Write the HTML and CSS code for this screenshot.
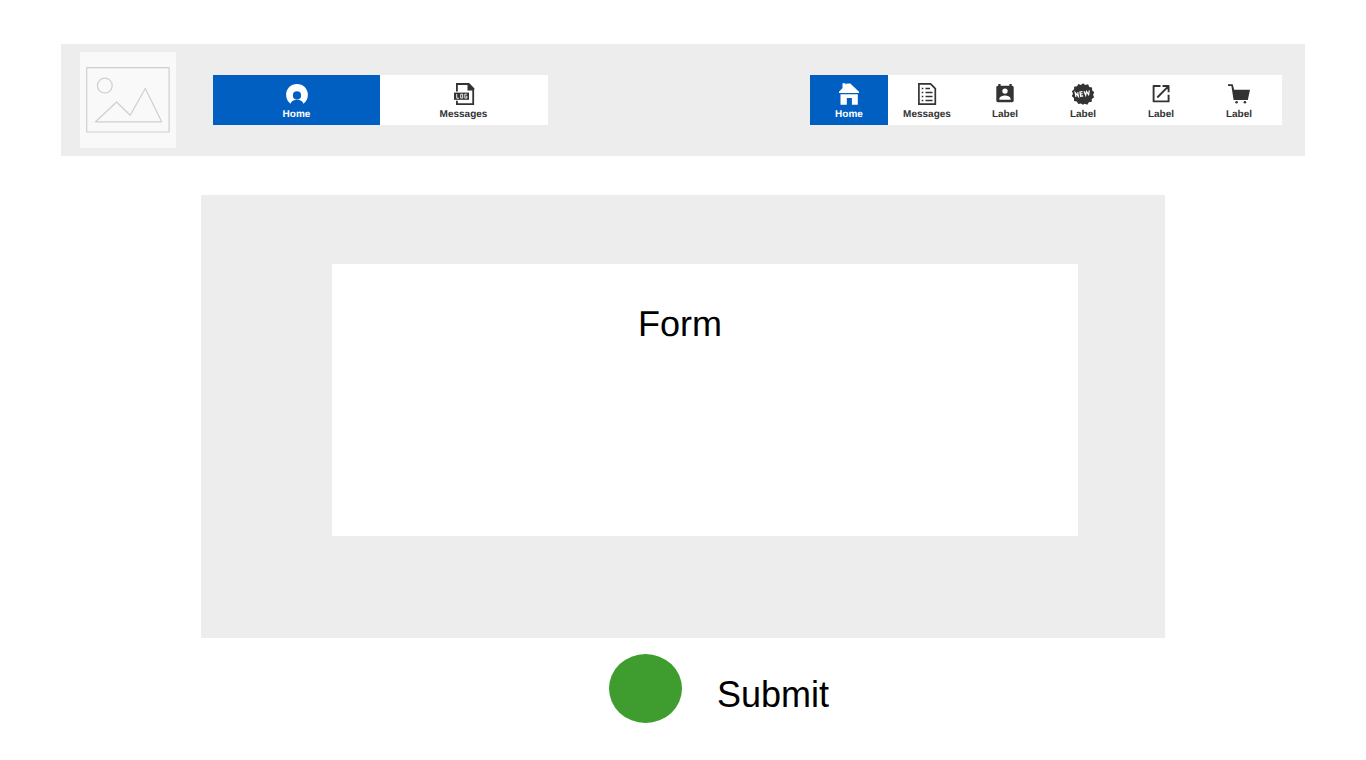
FILE: index.html
```html
<!DOCTYPE html>
<html lang="en">
<head>
<meta charset="utf-8">
<meta name="viewport" content="width=device-width, initial-scale=1">
<title>Form</title>
<link rel="stylesheet" href="styles.css">
</head>
<body>
<header class="header">
  <svg class="logo" viewBox="0 0 96 96" role="img" aria-label="Logo placeholder">
    <rect width="96" height="96" fill="#f9f9f9"/>
    <g fill="none" stroke="#cfcfcf" stroke-width="1.2" stroke-linejoin="round">
      <rect x="6.700" y="15.600" width="82.400" height="64.400" rx="0.600"/>
      <circle cx="24.800" cy="33.600" r="7.400"/>
      <path d="M15.500 69.800 36.600 50 50.200 63.300 65.300 36.500 81.700 69.800Z"/>
    </g>
  </svg>
  <nav class="tabs tabs-main" aria-label="Main">
    <a class="tab active" href="#">
      <svg class="icon" viewBox="0 0 24 24" fill="currentColor" aria-hidden="true">
        <path fill-rule="evenodd" d="M12 2C5.900 2 1.100 6.700 1.100 12.500c0 4.200 1.800 7.300 4.400 9.300C6.200 19.300 8.800 17.800 12 17.800s5.800 1.500 6.500 4c2.600-2 4.400-5.100 4.400-9.300C22.900 6.700 18.100 2 12 2Zm0 7.300a4.100 4.100 0 1 1 0 8.200 4.100 4.100 0 0 1 0-8.200Z"/>
      </svg>
      <span class="label">Home</span>
    </a>
    <a class="tab" href="#">
      <svg class="icon" viewBox="0 0 24 24" fill="currentColor" aria-hidden="true">
        <path d="M4.900 9.500V2h11.500l4.800 4.800v15.300H4.900V18.800" fill="none" stroke="currentColor" stroke-width="1.800"/>
        <path d="M15.500 1.200h1.800l4.800 5v2.200h-6.600Z"/>
        <rect x="2" y="10.600" width="15" height="7.200"/>
        <path d="M4.700 12v4.200h2.200M8.700 12.200h2v3.900h-2ZM14.900 12.200h-2.100v3.900h2.100v-1.900h-1" fill="none" stroke="#fff" stroke-width="0.900"/>
      </svg>
      <span class="label">Messages</span>
    </a>
  </nav>
  <nav class="tabs tabs-side" aria-label="Secondary">
    <a class="tab active" href="#">
      <svg class="icon" viewBox="0 0 24 24" fill="currentColor" aria-hidden="true">
        <path d="M2 11v-1.200L5.500 6V1.300h3v1.200l1.600-1.100h3.200L22 9.800V11Z"/>
        <path d="M3.500 12.200h17.300v10.600h-5.900v-6.700H9.800v6.700H3.500Z"/>
      </svg>
      <span class="label">Home</span>
    </a>
    <a class="tab" href="#">
      <svg class="icon" viewBox="0 0 24 24" fill="none" stroke="currentColor" stroke-width="1.700" aria-hidden="true">
        <path d="M3.900 1.900h11.700l4.700 4.700v15.500H3.900Z"/>
        <path d="M10.500 6.500h4.500M10.500 10.500h7M10.500 14.500h7M10.500 18.500h7"/>
        <path d="M6.700 6.500h1.600M6.700 10.500h1.600M6.700 14.500h1.600M6.700 18.500h1.600"/>
      </svg>
      <span class="label">Messages</span>
    </a>
    <a class="tab" href="#">
      <svg class="icon" viewBox="0 0 24 24" fill="currentColor" aria-hidden="true">
        <path fill-rule="evenodd" d="M5.300 2h2.300v1.800h8.800V2h2.300v1.800h.3c1 0 1.700.7 1.700 1.700v13c0 1-.7 1.700-1.700 1.700H5c-1 0-1.700-.7-1.700-1.700v-13c0-1 .7-1.700 1.700-1.700h.3ZM12 6.400a2.700 2.700 0 1 0 0 5.400 2.700 2.700 0 0 0 0-5.400ZM6.400 17.700h11.200v-1c0-2-3.700-3.100-5.600-3.100s-5.600 1.100-5.600 3.100Z"/>
      </svg>
      <span class="label">Label</span>
    </a>
    <a class="tab" href="#">
      <svg class="icon" viewBox="0 0 24 24" fill="currentColor" aria-hidden="true">
        <path d="m12 1.300 2.200 1.700 2.900-.7 1.200 2.600 2.800.5v2.900l2.100 2-1.100 2.400 1 2.600-2.300 1.700-.1 2.800-2.900.5-1.500 2.400-2.600-.9L12 22.800l-2-1.300-2.800.4-1.400-2.400-2.800-.6v-2.700L.8 14l1.200-2.300L.9 9.200l2.200-2V4.700L6 4.200l1.300-2.100 2.600.8Z"/>
        <path d="m4.900 15-.7-4.400 3.200 3.900-.7-4.400M11.500 9.600l-2.600.4.700 4.200 2.600-.4M9.200 12.100l2.300-.4M13 9.200l1.700 4 .8-3.700 2.100 3.100.7-4.300" fill="none" stroke="#fff" stroke-width="1.200"/>
      </svg>
      <span class="label">Label</span>
    </a>
    <a class="tab" href="#">
      <svg class="icon" viewBox="0 0 24 24" fill="none" stroke="currentColor" stroke-width="1.900" aria-hidden="true">
        <path d="M11.500 4H4.600v15.400h15V12.800M13.500 4h6.100v6.200M19.500 4.100 8.300 15.500" stroke-linejoin="round"/>
      </svg>
      <span class="label">Label</span>
    </a>
    <a class="tab" href="#">
      <svg class="icon" viewBox="0 0 24 24" fill="currentColor" aria-hidden="true">
        <path d="M1 2.300h4.700l1.500 5.400H23l-2.200 10.200H6.600L4.400 4H1Z"/>
        <circle cx="9.600" cy="20.200" r="1.300"/><circle cx="17.900" cy="20.200" r="1.300"/>
      </svg>
      <span class="label">Label</span>
    </a>
  </nav>
</header>
<main class="main">
  <section class="panel">
    <div class="form-card"><h1 class="title">Form</h1></div>
  </section>
  <div class="actions">
    <button class="submit" type="submit"><span class="dot"></span><span class="submit-text">Submit</span></button>
  </div>
</main>
</body>
</html>
```
FILE: styles.css
```css
* { box-sizing: border-box; }
body {
  margin: 0;
  padding: 44px 61px 0;
  background: #fff;
  color: #000;
  font-family: "Liberation Sans", Arial, sans-serif;
  text-rendering: geometricPrecision;
}
.header {
  display: flex;
  align-items: center;
  padding: 8px 23px 8px 19px;
  background: #ededed;
}
.logo { width: 96px; height: 96px; flex: none; }
.tabs { display: flex; background: #fff; }
.tabs-main { margin-left: 37px; padding-right: 1px; }
.tabs-main .tab { width: 167px; }
.tabs-side { margin-left: auto; padding-right: 4px; }
.tabs-side .tab { width: 78px; }
.tab {
  display: flex;
  flex-direction: column;
  align-items: center;
  gap: 3px;
  padding: 7px 0 4px;
  color: #333;
  text-decoration: none;
}
.tab.active { background: #005fc1; color: #fff; }
.icon { display: block; width: 24px; height: 24px; }
.label { font-size: 10px; font-weight: bold; line-height: 12px; }
.main { padding: 39px 140px 0; }
.panel { padding: 69px 87px 102px 131px; background: #ededed; }
.form-card { min-height: 272px; padding: 40px 50px 40px 0; background: #fff; }
.title {
  margin: 0;
  font-size: 36px;
  font-weight: normal;
  line-height: 40px;
  text-align: center;
}
.actions { display: flex; justify-content: center; padding: 16px 0 0 72px; }
.submit {
  display: flex;
  align-items: center;
  gap: 35px;
  padding: 0;
  border: 0;
  background: none;
  color: #000;
  font-family: inherit;
  font-size: 36px;
  line-height: 40px;
  cursor: pointer;
}
.dot { width: 73px; height: 69px; border-radius: 50%; background: #3f9c2f; }
.submit-text { padding-top: 13px; }
```
